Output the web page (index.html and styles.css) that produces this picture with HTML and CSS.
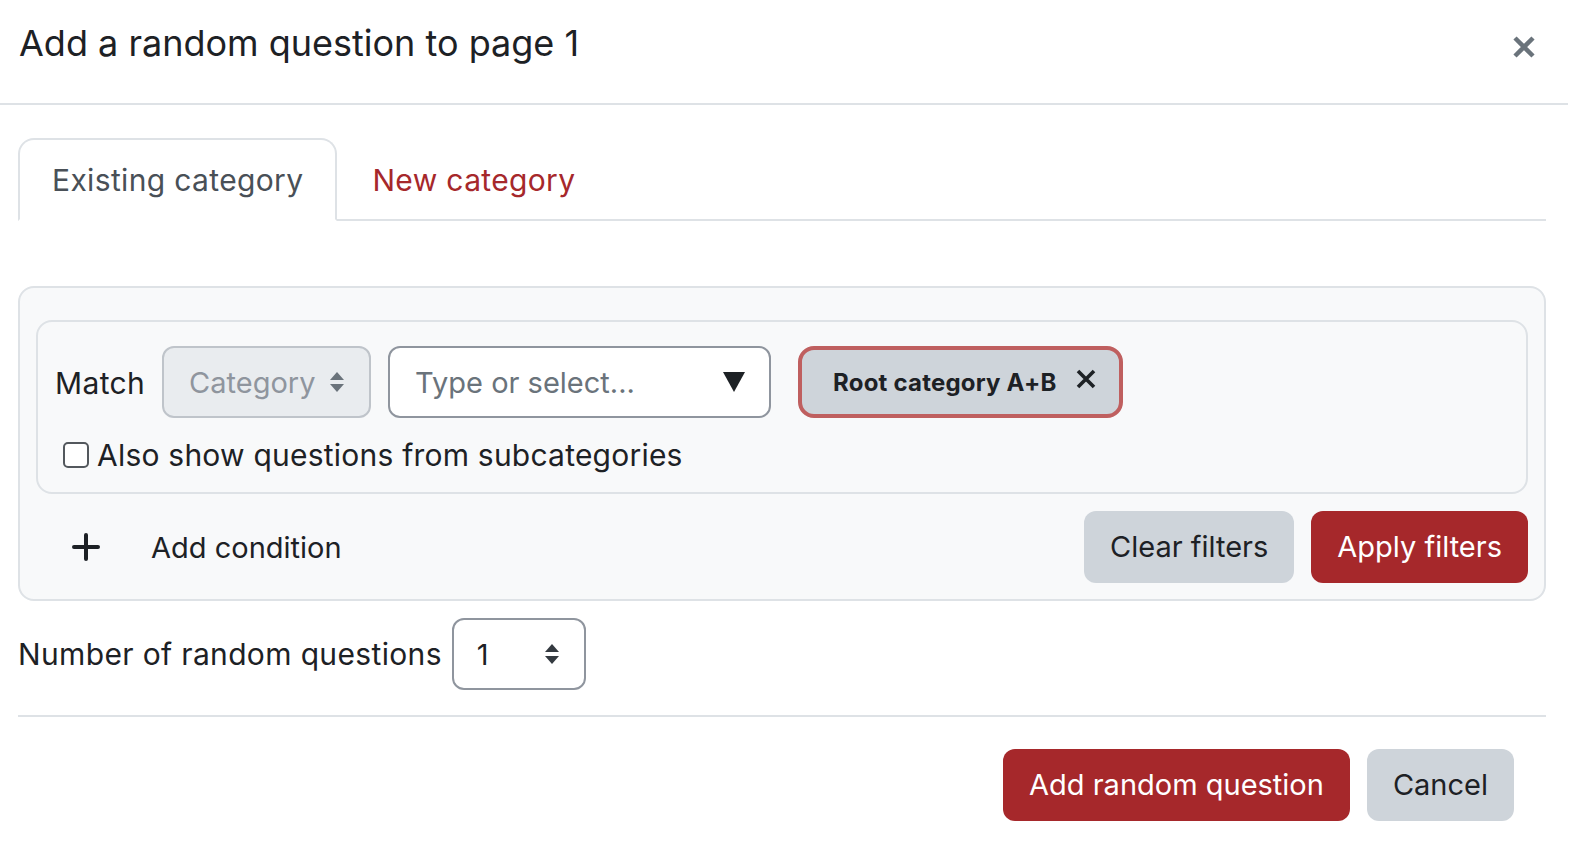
FILE: index.html
```html
<!DOCTYPE html>
<html lang="en">
<head>
<meta charset="utf-8">
<title>Add a random question</title>
<link rel="stylesheet" href="styles.css">
</head>
<body>
<div class="modal">
  <header class="modal-header">
    <h5 class="modal-title">Add a random question to page 1</h5>
    <button class="close" aria-label="Close">
      <svg width="24" height="24" viewBox="0 0 24 24"><path d="M3 3 L21 21 M21 3 L3 21" stroke="#6a737b" stroke-width="4.5" stroke-linecap="butt"/></svg>
    </button>
  </header>
  <div class="modal-body">
    <ul class="nav-tabs">
      <li class="tab active">Existing category</li>
      <li class="tab link">New category</li>
    </ul>
    <div class="filter-box">
      <div class="condition">
        <div class="cond-row">
          <span class="label">Match</span>
          <div class="select disabled">
            <span>Category</span>
            <svg class="updown" width="16" height="22" viewBox="0 0 16 22"><path d="M8 1 L15 9 L1 9 Z M8 21 L15 13 L1 13 Z" fill="#6a737b"/></svg>
          </div>
          <div class="autocomplete">
            <span>Type or select...</span>
            <svg width="22" height="20" viewBox="0 0 22 20"><path d="M0 0 L22 0 L11 20 Z" fill="#1d2125"/></svg>
          </div>
          <div class="chip">
            <span>Root category A+B</span>
            <svg width="20" height="20" viewBox="0 0 20 20"><path d="M2 2 L18 18 M18 2 L2 18" stroke="#1d2125" stroke-width="3.6"/></svg>
          </div>
        </div>
        <label class="check-row">
          <span class="checkbox"></span>
          <span>Also show questions from subcategories</span>
        </label>
      </div>
      <div class="actions-row">
        <div class="add-cond">
          <svg width="28" height="28" viewBox="0 0 28 28"><path d="M14 2 V26 M2 14 H26" stroke="#1d2125" stroke-width="4" stroke-linecap="round"/></svg>
          <span>Add condition</span>
        </div>
        <div class="btns">
          <button class="btn btn-secondary">Clear filters</button>
          <button class="btn btn-primary">Apply filters</button>
        </div>
      </div>
    </div>
    <div class="number-row">
      <span>Number of random questions</span>
      <div class="select small">
        <span>1</span>
        <svg class="updown" width="16" height="22" viewBox="0 0 16 22"><path d="M8 1 L15 9 L1 9 Z M8 21 L15 13 L1 13 Z" fill="#343a40"/></svg>
      </div>
    </div>
    <div class="footer">
      <button class="btn btn-primary">Add random question</button>
      <button class="btn btn-secondary">Cancel</button>
    </div>
  </div>
</div>
</body>
</html>
```
FILE: styles.css
```css
* { box-sizing: border-box; }
html, body { margin: 0; padding: 0; background: #fff; }
body {
  font-family: Inter, Roboto, "Liberation Sans", sans-serif;
  font-size: 30px;
  letter-spacing: 0.35px;
  color: #1d2125;
  width: 1572px;
  height: 862px;
  overflow: hidden;
}
.modal { width: 1568px; }
.modal-header {
  height: 105px;
  border-bottom: 2px solid #dee2e6;
  display: flex;
  align-items: flex-start;
  justify-content: space-between;
  padding: 18px 32px 0 19px;
}
.modal-title {
  margin: 0;
  font-size: 36px;
  letter-spacing: 0;
  font-weight: 400;
  line-height: 50px;
}
.close {
  border: 0;
  background: none;
  padding: 0;
  margin-top: 17px;
  width: 24px;
  height: 24px;
}
.close svg { display: block; }
.modal-body { padding: 33px 22px 0 18px; }
.nav-tabs {
  list-style: none;
  margin: 0;
  padding: 0;
  display: flex;
  border-bottom: 2px solid #dee2e6;
}
.tab {
  padding: 18px 32px 16px;
  line-height: 45px;
  border: 2px solid transparent;
  border-top-left-radius: 16px;
  border-top-right-radius: 16px;
  margin-bottom: -2px;
}
.tab.active {
  color: #495057;
  border-color: #dee2e6 #dee2e6 #fff;
  background: #fff;
}
.tab.link { color: #a6282b; padding-left: 33px; }
.filter-box {
  margin-top: 65px;
  background: #f8f9fa;
  border: 2px solid #dee2e6;
  border-radius: 16px;
  padding: 32px 16px 16px;
}
.condition {
  border: 2px solid #dee2e6;
  border-radius: 16px;
  padding: 24px 17px 20px;
}
.cond-row {
  display: flex;
  align-items: center;
  height: 72px;
}
.label { margin-right: 17px; padding-top: 2px; }
.select {
  height: 72px;
  border: 2px solid #8f959e;
  border-radius: 12px;
  display: flex;
  align-items: center;
  justify-content: space-between;
  background: #fff;
  font-size: 29px;
  letter-spacing: 0;
  flex-shrink: 0;
}
.select.disabled {
  width: 209px;
  background: #e9ecef;
  border-color: #bfc4ca;
  color: #8f959e;
  padding: 0 24px 0 25px;
}
.autocomplete {
  margin-left: 17px;
  width: 383px;
  height: 72px;
  border: 2px solid #8f959e;
  border-radius: 12px;
  background: #fff;
  color: #6a737b;
  font-size: 29px;
  letter-spacing: 0;
  display: flex;
  align-items: center;
  justify-content: space-between;
  padding: 0 24px 0 25px;
  flex-shrink: 0;
}
.chip {
  margin-left: 27px;
  height: 72px;
  border: 4px solid #bf5f5f;
  border-radius: 16px;
  background: #ced4da;
  font-weight: 700;
  font-size: 24px;
  letter-spacing: 0.2px;
  white-space: nowrap;
  flex-shrink: 0;
  display: flex;
  align-items: center;
  padding: 0 23px 0 31px;
  gap: 20px;
}
.chip svg { margin-top: -6px; }
.check-row {
  display: flex;
  align-items: center;
  margin-top: 19px;
  margin-left: 8px;
  height: 35px;
  letter-spacing: 0.22px;
}
.checkbox {
  width: 26px;
  height: 26px;
  border: 2px solid #53585d;
  border-radius: 5px;
  background: #fff;
  margin-right: 8px;
}
.actions-row {
  margin-top: 17px;
  display: flex;
  align-items: center;
  justify-content: space-between;
}
.add-cond {
  display: flex;
  align-items: center;
  padding-left: 36px;
  font-size: 29px;
  letter-spacing: 0;
}
.add-cond svg { margin-right: 51px; }
.btns { display: flex; gap: 17px; }
.btn {
  font-family: inherit;
  font-size: 29px;
  letter-spacing: 0;
  height: 72px;
  padding: 0 26px;
  border: 0;
  border-radius: 12px;
  line-height: 72px;
}
.btn-secondary { background: #ced4da; color: #1d2125; }
.btn-primary { background: #a6282b; color: #fff; }
.number-row {
  margin-top: 17px;
  display: flex;
  align-items: center;
  gap: 10px;
}
.select.small {
  width: 134px;
  padding: 0 24px 0 23px;
}
.footer {
  margin-top: 25px;
  border-top: 2px solid #dee2e6;
  padding-top: 32px;
  padding-right: 32px;
  display: flex;
  justify-content: flex-end;
  gap: 17px;
}
```
